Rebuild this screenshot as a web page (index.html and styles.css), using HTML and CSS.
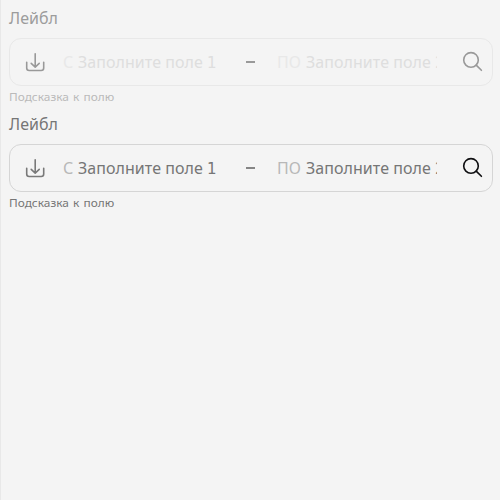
FILE: index.html
```
<!DOCTYPE html>
<html lang="ru">
<head>
<meta charset="utf-8">
<title>Поле диапазона</title>
<link rel="stylesheet" href="styles.css">
</head>
<body>
<section class="range disabled">
  <label class="label">Лейбл</label>
  <div class="field">
    <svg class="icon" width="24" height="24" viewBox="0 0 24 24"><path d="M3.7 12.2V18Q3.7 20.5 6.2 20.5H18.2Q20.7 20.5 20.7 18V12.2M12.2 3.8V17M8.2 13.4L12.2 17.1L16.2 13.4"/></svg>
    <div class="part first"><span class="prefix">С</span><span class="value">Заполните поле <span class="digit">1</span></span></div>
    <span class="dash"></span>
    <div class="part second"><span class="prefix">ПО</span><span class="value">Заполните поле <span class="digit">2</span></span></div>
    <svg class="icon search" width="24" height="24" viewBox="0 0 24 24"><circle cx="11" cy="9.9" r="7.3"/><path d="M16.2 15.1L21.4 20.3"/></svg>
  </div>
  <div class="hint">Подсказка к полю</div>
</section>
<section class="range">
  <label class="label">Лейбл</label>
  <div class="field">
    <svg class="icon" width="24" height="24" viewBox="0 0 24 24"><path d="M3.7 12.2V18Q3.7 20.5 6.2 20.5H18.2Q20.7 20.5 20.7 18V12.2M12.2 3.8V17M8.2 13.4L12.2 17.1L16.2 13.4"/></svg>
    <div class="part first"><span class="prefix">С</span><span class="value">Заполните поле <span class="digit">1</span></span></div>
    <span class="dash"></span>
    <div class="part second"><span class="prefix">ПО</span><span class="value">Заполните поле <span class="digit">2</span></span></div>
    <svg class="icon search" width="24" height="24" viewBox="0 0 24 24"><circle cx="11" cy="9.9" r="7.3"/><path d="M16.2 15.1L21.4 20.3"/></svg>
  </div>
  <div class="hint">Подсказка к полю</div>
</section>
</body>
</html>
```
FILE: styles.css
```
* { box-sizing: border-box; }
body {
  margin: 0;
  min-height: 100vh;
  padding: 6px 7px 0 8px;
  border-left: 1px solid #e8e8e8;
  background: #f4f4f4;
  color: #767676;
  font: 16px/24px "Noto Sans", sans-serif;
}
.range { height: 106px; }
.label { display: block; height: 32px; }
.field {
  display: flex;
  align-items: center;
  height: 48px;
  padding: 0 8px 0 13px;
  border: 1px solid #d5d5d5;
  border-radius: 12px;
}
.icon { flex: none; fill: none; stroke: #797979; stroke-width: 1.6; stroke-linecap: round; stroke-linejoin: round; }
.search { margin-left: auto; stroke: #101012; }
.part { display: flex; overflow: hidden; white-space: nowrap; }
.first { width: 160px; margin-left: 16px; }
.second { width: 160px; margin-left: 22px; }
.prefix { flex: none; width: 15px; color: #b8b8b8; }
.second .prefix { width: 29px; }
.value { letter-spacing: 0.05px; }
.digit { font-family: "DejaVu Sans", sans-serif; font-size: 15px; }
.dash { width: 9px; height: 2px; margin-left: 23px; background: #858585; }
.hint { width: max-content; padding-top: 3px; font-size: 11px; line-height: 16px; word-spacing: 1px; transform: scaleX(1.08); transform-origin: left; }
.disabled .label { color: #9c9c9c; }
.disabled .field { border-color: #e8e8e8; }
.disabled .icon { stroke: #999; }
.disabled .value { color: #dedede; }
.disabled .prefix { color: #e8e8e8; }
.disabled .dash { background: #999; }
.disabled .hint { color: #bababa; }
```
